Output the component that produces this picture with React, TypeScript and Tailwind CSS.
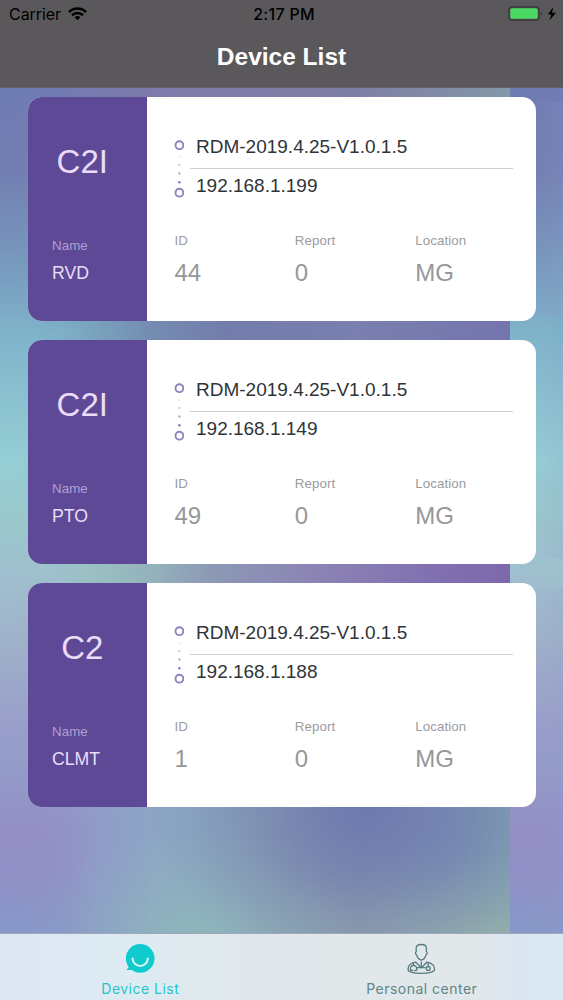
import { ReactNode } from "react";

type Device = { model: string; name: string; ip: string; id: string };

const devices: Device[] = [
  { model: "C2I", name: "RVD", ip: "192.168.1.199", id: "44" },
  { model: "C2I", name: "PTO", ip: "192.168.1.149", id: "49" },
  { model: "C2", name: "CLMT", ip: "192.168.1.188", id: "1" },
];

function StatusBar() {
  return (
    <div className="grid h-7 grid-cols-3 items-center font-[Inter,sans-serif] text-[16px] leading-7 text-black">
      <div className="flex items-center gap-[7px] pl-[9px]">
        <span className="-tracking-[0.05px]">Carrier</span>
        <svg width="19" height="14" viewBox="0 0 20 14" fill="none" stroke="currentColor" strokeWidth="2.7">
          <path d="M1 5.1C6-.1 14-.1 19 5.1" />
          <path d="M4.2 8.3c3.3-3.2 8.3-3.2 11.6 0" />
          <path d="M7 10.3c1.8-1.5 4.2-1.5 6 0L10 13.5Z" fill="currentColor" stroke="none" />
        </svg>
      </div>
      <div className="pl-[5px] text-center font-medium tracking-[0.3px]">2:17 PM</div>
      <div className="flex items-center justify-end pr-[6px]">
        <svg width="49" height="16" viewBox="0 0 49 16">
          <rect x="1" y="1" width="30" height="13" rx="3.3" fill="none" stroke="#3a393c" strokeWidth="1.5" />
          <rect x="2.3" y="2.3" width="27.4" height="10.4" rx="1.8" fill="#4bd864" />
          <path d="M33 5.5c1.6.8 1.6 3.2 0 4Z" fill="#3a393c" />
          <path d="M45.3 1 39.8 8.5h3.6L41.4 14.5 48 6.7h-4Z" fill="#000" />
        </svg>
      </div>
    </div>
  );
}

function LinkDots() {
  return (
    <svg className="mt-[2px] shrink-0" width="10" height="60" viewBox="0 0 10 60">
      <g fill="none" stroke="#8e83bf" strokeWidth="1.9">
        <circle cx="5.4" cy="6.2" r="3.9" />
        <circle cx="5.4" cy="53.7" r="3.9" />
      </g>
      <g fill="#7669ae">
        <circle cx="5.4" cy="18" r="0.8" opacity=".25" />
        <circle cx="5.4" cy="26" r="1.1" opacity=".4" />
        <circle cx="5.4" cy="34.5" r="1.2" opacity=".55" />
        <circle cx="5.4" cy="43.2" r="1.3" opacity=".85" />
      </g>
    </svg>
  );
}

function Field({ label, value }: { label: string; value: string }) {
  return (
    <div className="w-[121px]">
      <div className="text-[13.3px] leading-4 tracking-[0.1px] text-[#9b9b9e]">{label}</div>
      <div className="mt-[10px] text-[24px] leading-7 text-[#97979a]">{value}</div>
    </div>
  );
}

function DeviceCard({ device }: { device: Device }) {
  return (
    <article className="flex h-56 w-[508px] overflow-hidden rounded-[14px] bg-white">
      <div className="flex w-[119.5px] shrink-0 flex-col bg-[#5e4997] text-[#e9dcf7]">
        <div className="mt-[45px] pr-[10px] text-center text-[33px] leading-10">{device.model}</div>
        <div className="mt-[56px] pl-[24.5px] text-[13.3px] leading-4 tracking-[0.1px] text-[#af9fd1]">Name</div>
        <div className="mt-[7px] pl-[24.5px] text-[17.7px] leading-6">{device.name}</div>
      </div>
      <div className="min-w-0 flex-1">
        <div className="flex pl-[27px] pt-[40px]">
          <LinkDots />
          <div className="ml-[6px] w-[323px] shrink-0 text-[19px] leading-[22px] text-[#303438]">
            <div className="-mt-px h-8 pl-[6px]">RDM-2019.4.25-V1.0.1.5</div>
            <div className="h-px bg-[#d0cfd7]" />
            <div className="pl-[6px] pt-[6px]">{device.ip}</div>
          </div>
        </div>
        <div className="mt-[34px] flex pl-[27.5px]">
          <Field label="ID" value={device.id} />
          <Field label="Report" value="0" />
          <Field label="Location" value="MG" />
        </div>
      </div>
    </article>
  );
}

function Tab({ icon, label, color }: { icon: ReactNode; label: string; color: string }) {
  return (
    <div className={`flex flex-1 flex-col items-center pr-[2px] pt-[9px] ${color}`}>
      {icon}
      <span className="mt-[5px] pl-[1px] font-[Inter,sans-serif] text-[14px] leading-[18px] tracking-[0.48px]">{label}</span>
    </div>
  );
}

const chatIcon = (
  <svg width="32" height="32" viewBox="0 0 32 32">
    <circle cx="16.2" cy="15.4" r="14.3" fill="#0fcbcd" />
    <path d="M3.5 19 5 23.5 2.5 27c3 .2 5.5 0 8.5-1Z" fill="#0fcbcd" />
    <path d="M8.5 15.4c.6 10 14.8 10 15.4 0" fill="none" stroke="#e1f3f4" strokeWidth="2" strokeLinecap="round" />
  </svg>
);

const doctorIcon = (
  <svg width="32" height="32" viewBox="0 0 32 32" fill="none" stroke="#557d80" strokeWidth="1.3" strokeLinecap="round" strokeLinejoin="round">
    <path d="M11.2 8.7V4.7C11.2 2.7 13 1.5 16.3 1.5S21.4 2.7 21.4 4.7V8.7C22.6 9.2 22.3 11 21 11.7C20.6 14 18.8 16.6 16.3 17.2C13.8 16.6 12 14 11.6 11.7C10.3 11 10 9.2 11.2 8.7Z" />
    <path d="M10.8 19.2C5.5 20.3 3 22.5 3 26C3 28.9 8.5 30.3 16.3 30.3S29.6 28.9 29.6 26C29.6 22.5 27 20.3 21.8 19.2" />
    <path d="M10.8 19.2 16.3 24.7 21.8 19.2M16.3 18.8V24.7M12.5 24.7H20" />
    <path d="M8.5 20.5V22.5M6 27.5C4.3 24.5 6.5 22.5 8.5 22.5S13 24.5 11.3 27.5M6 27.5H7.8M9.8 27.5H11.3M23.2 20.3V23.5" />
    <circle cx="23.2" cy="25.5" r="2" />
  </svg>
);

export default function App() {
  return (
    <div className="relative isolate flex h-[1000px] w-[563px] flex-col overflow-hidden font-['Liberation_Sans',Arial,sans-serif]">
      <div className="absolute inset-0 -z-10 bg-[linear-gradient(90deg,#727cb2_0%,#7c7bae_20%,#807ba8_45%,#7e7ea5_70%,#8398a8_100%),linear-gradient(90deg,#80b3ca_0%,#7aa3bd_14%,#7489b0_32%,#737cab_45%,#797fae_70%,#7475ad_100%),linear-gradient(90deg,#9fc2cf_0%,#99c1bf_17%,#93b2bb_30%,#8c98b5_42%,#8b81b3_65%,#8070b1_85%,#7e68ad_100%),radial-gradient(ellipse_220px_160px_at_365px_810px,#6e7aaf_0%,#6e7aafaa_30%,#6e7aaf44_65%,#6e7aaf00_100%),radial-gradient(ellipse_280px_100px_at_510px_950px,#97b0ab_0%,#97b0ab99_40%,#97b0ab00_100%),radial-gradient(ellipse_170px_110px_at_195px_940px,#8eb6bb_0%,#8eb6bb77_45%,#8eb6bb00_100%),linear-gradient(90deg,#9590c4_0%,#8fa1ca_20%,#8ca9c2_38%,#8c9fb3_55%,#858fae_70%,#7d94b5_88%,#7fa1b1_100%)] bg-[length:510px_20px,510px_30px,510px_30px,510px_1000px,510px_1000px,510px_1000px,510px_1000px] bg-[position:0_82px,0_315px,0_558px,0_0,0_0,0_0,0_0] bg-repeat-x" />
      <div className="absolute inset-0 -z-10 bg-[linear-gradient(180deg,#6f7cb4_88px,#727eb1_170px,#7798bd_260px,#80b5cb_340px,#95ced5_460px,#9ac8cc_520px,#9fc0cf_570px,#9fb2ca_640px,#999fc9_720px,#949bc9_770px,#938fc5_830px,#918fc5_870px,#8798c8_930px)] [mask-image:linear-gradient(90deg,#000_0px,#000_20px,#000c_54px,#0004_95px,transparent_150px)] [mask-size:510px_100%]" />

      <header className="h-[88px] shrink-0 border-b border-[#656166] bg-[#5a585b]">
        <StatusBar />
        <h1 className="pt-[13px] text-center text-[24.5px] font-bold leading-8 text-white">Device List</h1>
      </header>

      <main className="flex flex-1 flex-col gap-[19px] pl-[27.5px] pt-[9px]">
        {devices.map((device) => (
          <DeviceCard key={device.ip} device={device} />
        ))}
      </main>

      <nav className="flex h-[67px] shrink-0 border-t border-[#9da9bb] bg-[linear-gradient(90deg,#dce7f4_0%,#deebf2_25%,#e1e7ea_50%,#e1e8ea_85%,#dbe6f3_92%,#dce8f4_100%)]">
        <Tab icon={chatIcon} label="Device List" color="text-[#22c6ca]" />
        <Tab icon={doctorIcon} label="Personal center" color="text-[#5f8589]" />
      </nav>
    </div>
  );
}
